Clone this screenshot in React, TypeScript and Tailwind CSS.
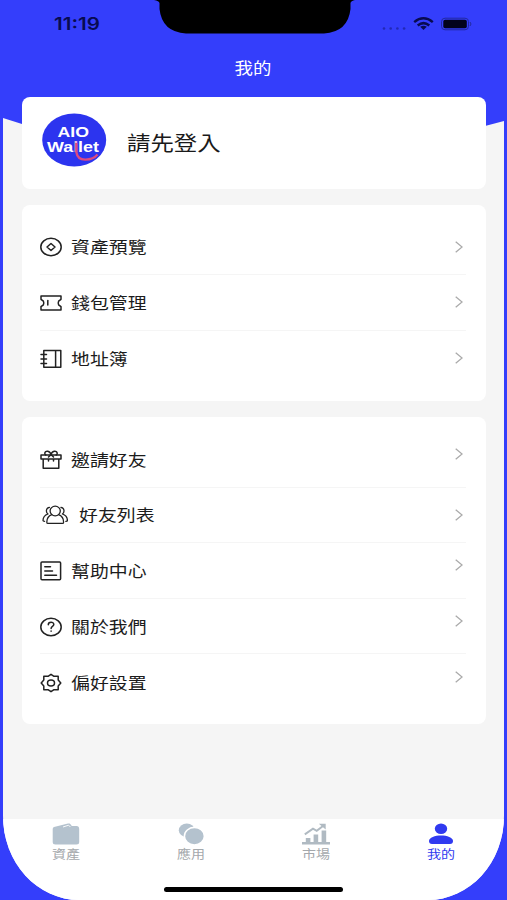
import React from 'react';
import clsx from 'clsx';

type IconProps = { className?: string };

// Shared stroke settings for the menu icons
const stroke = { fill: 'none', stroke: '#222', strokeWidth: 1.5, strokeLinejoin: 'round' as const, strokeLinecap: 'round' as const };

const CoinIcon = () => (
  <svg width="22" height="20" viewBox="0 0 22 20" {...stroke}>
    <ellipse cx="11" cy="10" rx="10.2" ry="8.7" />
    <path d="M11 6.5 15 10 11 13.5 7 10Z" />
  </svg>
);

const TicketIcon = () => (
  <svg width="22" height="20" viewBox="0 0 22 20" {...stroke}>
    <path d="M1 3H21V6.3L18.6 8.2Q17.8 10 18.6 11.8L21 13.7V17H1V13.7L3.400 11.8Q4.200 10 3.400 8.200L1 6.300Z" />
    <path d="M7.800 7.500V12" />
  </svg>
);

const AddressBookIcon = () => (
  <svg width="22" height="20" viewBox="0 0 22 20" {...stroke}>
    <path d="M3.800 1.500H20.800V18.200H3.800ZM15.600 2V18M1 5.400H6.500M1 10H6.500M1 14.500H6.500" />
  </svg>
);

const GiftIcon = () => (
  <svg width="22" height="20" viewBox="0 0 22 20" {...stroke}>
    <path d="M1 5H21V9H1ZM3.200 9V18.200H18.800V9M8.500 9V11M13.500 9V11" />
    <path d="M11 5C10.500 .500 4.800 .300 4.800 3.200Q4.800 4.400 5.800 5M11 5C11.500 .500 17.200 .300 17.200 3.200Q17.200 4.400 16.200 5M8.500 7 11 4.500 13.500 7" />
  </svg>
);

const FriendsIcon = () => (
  <svg width="26" height="20" viewBox="0 0 26 20" {...stroke} strokeWidth={1.3}>
    <ellipse cx="13.200" cy="6" rx="5.100" ry="4.800" />
    <path d="M9.800 9.700C6.500 11 4.800 14 4.800 17.200Q4.800 18.400 6 18.400H20.400Q21.600 18.400 21.600 17.200C21.600 14 19.900 11 16.600 9.700" />
    <path d="M7.500 2.300C3.800 2.800 3.600 7.400 6 9C3 10 1 12.700 1 15.500Q1 16.300 2.600 16.300M18.900 2.300C22.600 2.800 22.800 7.400 20.400 9C23.400 10 25.400 12.700 25.400 15.500Q25.400 16.300 23.800 16.300" />
  </svg>
);

const HelpIcon = () => (
  <svg width="22" height="20" viewBox="0 0 22 20" {...stroke}>
    <rect x="1" y="1" width="19.600" height="17.800" rx="1" />
    <path d="M4.800 5.800H10.500M4.800 10H12.500M4.800 14.300H16.500" />
  </svg>
);

const AboutIcon = () => (
  <svg width="22" height="20" viewBox="0 0 22 20" {...stroke}>
    <ellipse cx="11" cy="10" rx="10.200" ry="8.700" />
    <path d="M8.300 7.700C8.300 4.400 13.800 4.400 13.800 7.500C13.800 9.500 11.100 9.300 11.100 11.400M11.100 14V14.300" />
  </svg>
);

const SettingsIcon = () => (
  <svg width="22" height="20" viewBox="0 0 22 20" {...stroke}>
    <path d="M11 1.300 14 3.300H18.200V7L20.800 10 18.200 13V16.700H14L11 18.700 8 16.700H3.800V13L1.200 10 3.800 7V3.300H8Z" />
    <ellipse cx="11" cy="10" rx="3.500" ry="3" />
  </svg>
);

const AssetsTab = () => (
  <svg width="28" height="22" viewBox="0 0 28 22" fill="#b4c2ce">
    <path d="M2 4 16 .600C17.500 .200 18 .400 19.800 3H24.500Q27.200 3.200 27.200 6V19Q27.200 21.500 24.500 21.500H3.500Q.700 21.500 .700 19V6Q.700 4.400 2 4Z" />
    <path d="M11 4 16.600 2.200 18.400 4" fill="none" stroke="#fff" strokeWidth=".9" />
  </svg>
);

const AppsTab = () => (
  <svg width="28" height="22" viewBox="0 0 28 22" fill="#b4c2ce">
    <ellipse cx="9.800" cy="7.300" rx="8" ry="6.800" />
    <ellipse cx="17.400" cy="13.200" rx="10" ry="8.800" stroke="#fff" strokeWidth="1.600" />
  </svg>
);

const MarketTab = () => (
  <svg width="28" height="22" viewBox="0 0 28 22" fill="#b0bac2">
    <path d="M0 19H28V21.400H0ZM3.800 15H8.400V19H3.800ZM11.600 11.500H16.200V19H11.600ZM19.600 7.500H24.200V19H19.600Z" />
    <path d="M2.800 11.400 11 5.700 14.700 7.800 22 2.300" fill="none" stroke="#b0bac2" strokeWidth="1.900" />
    <path d="M16.800 .800H23.700V6.500L21 4.200Z" />
  </svg>
);

const MineTab = () => (
  <svg width="28" height="22" viewBox="0 0 28 22" fill="#303af0">
    <ellipse cx="14" cy="5.800" rx="6.200" ry="5.200" />
    <path d="M2 18C2 10.500 26 10.500 26 18Q26 21 23 21H5Q2 21 2 18Z" />
  </svg>
);

const Chevron = ({ className }: IconProps) => (
  <svg className={className} width="8" height="12" viewBox="0 0 8 12" fill="none" stroke="#aaa" strokeWidth="1.300">
    <path d="M.7.8 7.1 6 .7 11.2" />
  </svg>
);

const walletItems = [
  { label: '資產預覽', icon: CoinIcon },
  { label: '錢包管理', icon: TicketIcon },
  { label: '地址簿', icon: AddressBookIcon },
];

const moreItems = [
  { label: '邀請好友', icon: GiftIcon, chevron: 'mb-[11px]' },
  { label: '好友列表', icon: FriendsIcon, wide: true },
  { label: '幫助中心', icon: HelpIcon, chevron: 'mb-[10px]' },
  { label: '關於我們', icon: AboutIcon, chevron: 'mb-[10px]' },
  { label: '偏好設置', icon: SettingsIcon, chevron: 'mb-[10px]' },
];

const tabs = [
  { label: '資產', icon: AssetsTab },
  { label: '應用', icon: AppsTab },
  { label: '市場', icon: MarketTab },
  { label: '我的', icon: MineTab, active: true },
];

type Item = { label: string; icon: () => React.JSX.Element; chevron?: string; wide?: boolean };

function MenuCard({ items, className }: { items: Item[]; className?: string }) {
  return (
    <ul className={clsx('rounded-lg bg-white pl-[18px] pr-[20px]', className)}>
      {items.map(({ label, icon: Icon, chevron, wide }, i) => (
        <li
          key={label}
          className={clsx('flex h-[55.6px] items-center border-[#f5f5f5]', i < items.length - 1 && 'border-b')}
        >
          <span className={clsx('flex shrink-0 pt-[1px]', wide ? 'ml-[2px] mr-[11px]' : 'mr-[9px]')}>
            <Icon />
          </span>
          <span className="origin-left scale-x-[1.18] pt-[3px] text-base leading-5 text-[#1c1c1c]">{label}</span>
          <Chevron className={clsx('ml-auto mr-[3px]', chevron)} />
        </li>
      ))}
    </ul>
  );
}

export default function App() {
  return (
    <div className="h-[900px] w-[507px] overflow-hidden bg-[#343efb] px-[3px] font-['Liberation_Sans','Noto_Sans_CJK_TC',sans-serif]">
      <div className="relative isolate flex h-[900px] flex-col overflow-hidden rounded-b-[76px_84px] bg-[#f5f5f5]">
        {/* Curved blue backdrop behind the header */}
        <svg className="absolute left-0 top-0 -z-10" width="501" height="150" viewBox="0 0 501 150">
          <path d="M0 0H501V121L482 126Q250 170 19 124L0 118Z" fill="#343efb" />
        </svg>

        {/* Status bar */}
        <header className="flex h-[48px] shrink-0 items-start justify-between">
          <span className="ml-[51px] mt-[14px] origin-left scale-x-[1.21] font-['Inter',sans-serif] text-[17px] font-semibold leading-5 text-[#080b50]">
            11:19
          </span>
          <svg className="absolute left-[149px] top-0" width="205" height="34" viewBox="0 0 205 34">
            <path d="M2 0H203Q199 1 198.500 3V9Q196 32 172 33.500H34Q10 32 7.500 9V3Q7 1 2 0Z" fill="#000" />
          </svg>
          <svg className="mr-[31px] mt-[15px]" width="91" height="18" viewBox="0 0 91 18">
            <g fill="#2229b5">
              <circle cx="2" cy="13.500" r="1.300" />
              <circle cx="8.700" cy="13.500" r="1.300" />
              <circle cx="15.400" cy="13.500" r="1.300" />
              <circle cx="22.100" cy="13.500" r="1.300" />
            </g>
            <g fill="none" stroke="#080b50" strokeWidth="2.500">
              <path d="M32.200 7.100Q41.500-.5 50.800 7.100" />
              <path d="M35.700 10.400Q41.500 5.800 47.300 10.400" />
            </g>
            <path d="M38.200 11.800Q41.500 9.800 44.800 11.800L41.500 15Z" fill="#080b50" />
            <rect x="59.500" y="3.200" width="27" height="11.600" rx="3.500" fill="none" stroke="#2229a0" />
            <rect x="61.300" y="4.800" width="23.500" height="8.400" rx="1.800" fill="#02031c" />
            <path d="M88 7Q90 9 88 11" stroke="#2229a0" fill="none" />
          </svg>
        </header>

        <h1 className="flex h-[49px] shrink-0 justify-center pt-[11px] text-base leading-5 text-white">
          <span className="scale-x-[1.15]">我的</span>
        </h1>

        <main className="flex flex-1 flex-col gap-4 pl-[19px] pr-[18.5px]">
          <section className="flex h-[92px] items-center rounded-lg bg-white pl-5">
            <svg className="mb-[6px]" width="65" height="54" viewBox="0 0 65 54">
              <ellipse cx="32.200" cy="27" rx="32" ry="26.500" fill="#2c34ef" />
              <g fill="#fff" fontFamily="Liberation Sans, sans-serif" fontWeight="bold" fontSize="14">
                <text x="15.500" y="24" textLength="31.500" lengthAdjust="spacingAndGlyphs">AIO</text>
                <text x="5" y="38.500" textLength="52" lengthAdjust="spacingAndGlyphs">
                  Wa<tspan fill="#e9b8dc">l</tspan>let
                </text>
              </g>
              <path d="M34.300 30V39Q35.500 46.800 43.500 46.600Q51.500 46.500 55.500 41.500" fill="none" stroke="#dc4a80" strokeWidth="2.300" />
            </svg>
            <span className="ml-5 origin-left scale-x-[1.17] pt-[2px] text-[20px] leading-6 text-[#1a1a1a]">請先登入</span>
          </section>

          <MenuCard items={walletItems} className="h-[196px] pt-[14.5px]" />
          <MenuCard items={moreItems} className="h-[307px] pt-[15px]" />
        </main>

        {/* Bottom tabs */}
        <nav className="flex h-[81px] shrink-0 bg-white">
          {tabs.map(({ label, icon: Icon, active }) => (
            <a key={label} className="flex flex-1 flex-col items-center pt-[4px]">
              <Icon />
              <span
                className={clsx('mt-[2px] scale-x-[1.17] text-xs leading-4', active ? 'text-[#303af0]' : 'text-[#a4a8ac]')}
              >
                {label}
              </span>
            </a>
          ))}
        </nav>
        <div className="absolute bottom-[8px] left-[161px] h-[5px] w-[179px] rounded-full bg-black" />
      </div>
    </div>
  );
}
